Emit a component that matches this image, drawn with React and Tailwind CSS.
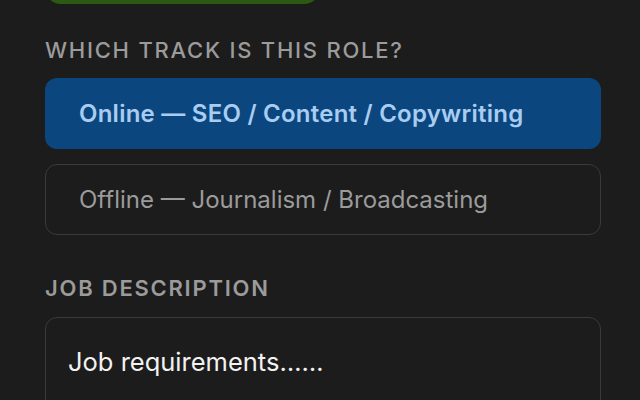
export default function App() {
  return (
    <div
      className="w-[640px] h-[400px] overflow-hidden bg-[#1c1c1c] pl-[45px] pr-[39px]"
      style={{ fontFamily: 'Inter, "Noto Sans", sans-serif' }}
    >
      <div className="-mt-[48px] w-[275px] h-[52px] rounded-[16px] bg-[#2d5a12]" />
      <div className="mt-[32px] text-[22px] leading-[28px] font-medium tracking-[0.08em] text-[#9b9b9b]">
        WHICH TRACK IS THIS ROLE?
      </div>
      <div className="mt-[14px] flex flex-col gap-[15px]">
        <div className="h-[71px] rounded-[12px] bg-[#0b477e] flex items-center pl-[34px] text-[24px] tracking-[0.01em] font-semibold text-[#a9cdf2]">
          Online — SEO / Content / Copywriting
        </div>
        <div className="h-[71px] rounded-[12px] border border-[#3a3a3a] flex items-center pl-[33px] text-[24px] text-[#9b9b9b]">
          Offline — Journalism / Broadcasting
        </div>
      </div>
      <div className="mt-[39px] text-[22px] leading-[28px] font-semibold tracking-[0.08em] text-[#9b9b9b]">
        JOB DESCRIPTION
      </div>
      <div className="mt-[15px] h-[140px] rounded-[12px] border border-[#3a3a3a] pl-[22px] pt-[28px] text-[25.5px] leading-[32px] text-[#f2f2f2]">
        Job requirements……
      </div>
    </div>
  );
}
